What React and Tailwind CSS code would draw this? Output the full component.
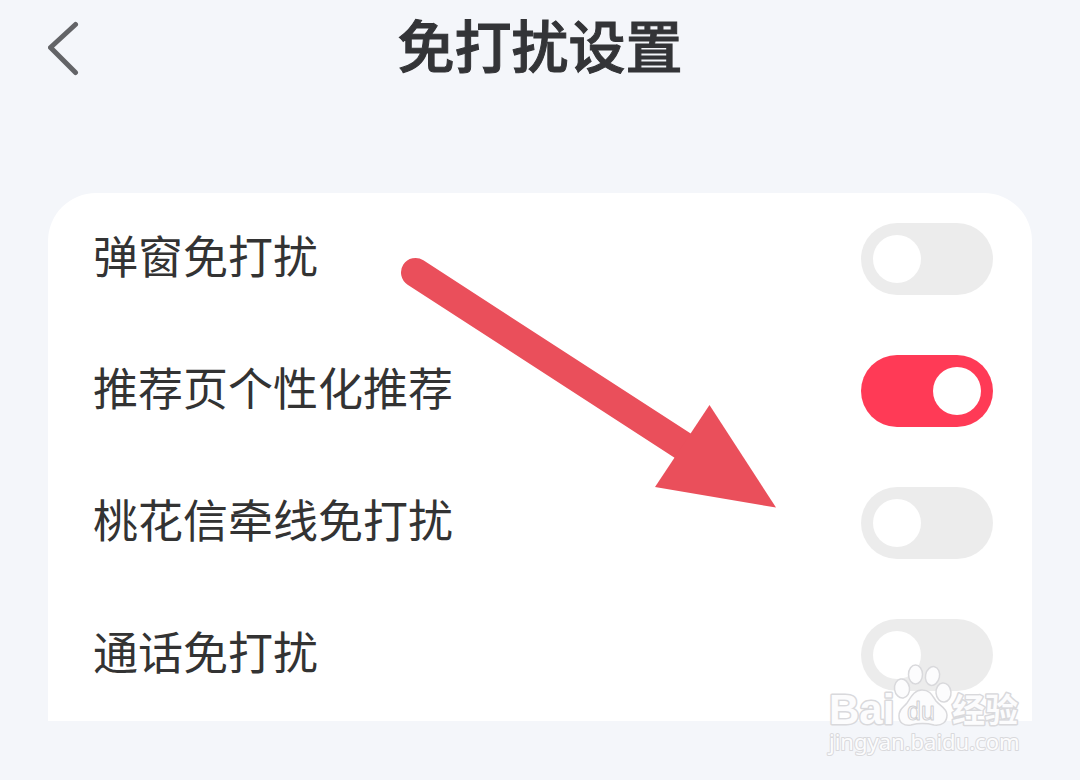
import { useState } from "react";

const INITIAL = [
  { id: "popup", label: "弹窗免打扰", on: false },
  { id: "personalized", label: "推荐页个性化推荐", on: true },
  { id: "letters", label: "桃花信牵线免打扰", on: false },
  { id: "calls", label: "通话免打扰", on: false },
];

function SettingRow({ item, onToggle }) {
  return (
    <li className="flex h-[132px] items-center justify-between gap-6 pl-[45px] pr-[39px]">
      <label htmlFor={item.id} className="pb-2 text-[45px] leading-[60px] text-[#333333]">
        {item.label}
      </label>
      <input
        id={item.id}
        type="checkbox"
        role="switch"
        checked={item.on}
        onChange={() => onToggle(item.id)}
        className="flex h-[72px] w-[132px] shrink-0 cursor-pointer appearance-none items-center rounded-full bg-[#ececec] px-3 before:block before:size-12 before:rounded-full before:bg-white before:content-[''] checked:justify-end checked:bg-[#ff3a56]"
      />
    </li>
  );
}

function Arrow() {
  return (
    <svg
      className="pointer-events-none absolute left-[352px] top-[57px]"
      width="384"
      height="264"
      viewBox="400 250 384 264"
      fill="#ea4f5b"
      aria-hidden="true"
    >
      <path d="M415.5 272.5 684 446.5" stroke="#ea4f5b" strokeWidth="29" strokeLinecap="round" fill="none" />
      <path d="M709.5 405 776 507.5 655 487Z" />
    </svg>
  );
}

function Watermark() {
  return (
    <svg
      className="pointer-events-none absolute right-[52px] top-[660px]"
      width="208"
      height="100"
      viewBox="820 660 208 100"
      fill="#fcfcfd"
      stroke="#d9d9dc"
      strokeWidth="1.5"
      strokeLinejoin="round"
    >
      <ellipse cx="915.5" cy="674.5" rx="7" ry="9.5" />
      <ellipse cx="932.5" cy="676" rx="7" ry="9.5" transform="rotate(12 932.5 676)" />
      <ellipse cx="902" cy="688.5" rx="7.5" ry="9.5" transform="rotate(-8 902 688.5)" />
      <ellipse cx="943.5" cy="692.5" rx="7.5" ry="9.5" transform="rotate(-5 943.5 692.5)" />
      <path d="M922 690C914 690 911 697 907 703C903 708 899 709 899 716C899 723 904 726 911 725C919 723 926 723 934 725C942 726 947 722 947 715C947 708 940 706 936 701C932 695 930 690 922 690Z" />
      <g fontFamily="'Liberation Sans', sans-serif">
        <text x="829" y="724" fontSize="42" fontWeight="700" strokeWidth="3" paintOrder="stroke">
          Bai
        </text>
        <text x="907" y="720" fontSize="25" strokeWidth="1" stroke="#cfcfd2">
          du
        </text>
      </g>
      <text
        x="952"
        y="722"
        fontSize="33"
        fontWeight="700"
        strokeWidth="3"
        paintOrder="stroke"
        fontFamily="'Noto Sans CJK SC', sans-serif"
      >
        经验
      </text>
      <text
        x="829"
        y="750"
        fontSize="22"
        strokeWidth="2"
        paintOrder="stroke"
        fontFamily="'Noto Sans', sans-serif"
      >
        jingyan.baidu.com
      </text>
    </svg>
  );
}

export default function App() {
  const [items, setItems] = useState(INITIAL);
  const toggle = (id) =>
    setItems((list) => list.map((it) => (it.id === id ? { ...it, on: !it.on } : it)));

  return (
    <div
      lang="zh-CN"
      className="relative min-h-screen bg-[#f4f6fa] px-12 pb-12 font-['Noto_Sans_CJK_SC',sans-serif]"
    >
      <header className="grid grid-cols-[1fr_auto_1fr] items-start">
        <button type="button" aria-label="返回" className="mt-5 justify-self-start">
          <svg width="32" height="58" viewBox="48 20 32 58" fill="none" stroke="#636467" strokeWidth="5" strokeLinecap="round" strokeLinejoin="round">
            <path d="M75.5 24.5 50.5 47.5 75.5 72.5" />
          </svg>
        </button>
        <h1 className="text-[57px] font-medium leading-[86px] text-[#333437] [-webkit-text-stroke:1px_#333437]">
          免打扰设置
        </h1>
      </header>

      <main className="relative mt-[107px]">
        <ul className="rounded-t-[48px] bg-white">
          {items.map((item) => (
            <SettingRow key={item.id} item={item} onToggle={toggle} />
          ))}
        </ul>
        <Arrow />
      </main>
      <Watermark />
    </div>
  );
}
